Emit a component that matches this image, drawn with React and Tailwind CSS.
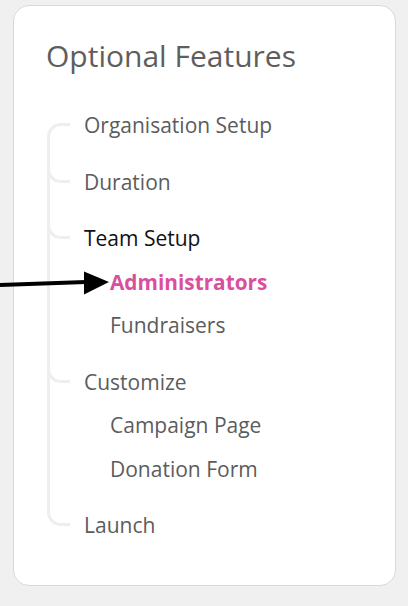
import React from "react";

const steps = [
  { label: "Organisation Setup", level: 0 },
  { label: "Duration", level: 0 },
  { label: "Team Setup", level: 0, current: true },
  { label: "Administrators", level: 1, active: true },
  { label: "Fundraisers", level: 1 },
  { label: "Customize", level: 0 },
  { label: "Campaign Page", level: 1 },
  { label: "Donation Form", level: 1 },
  { label: "Launch", level: 0 },
];

function Gutter({ index, step }) {
  const isFirst = index === 0;
  const isLast = index === steps.length - 1;

  if (step.level === 1) {
    return (
      <div className="relative w-[37px] shrink-0 self-stretch">
        <div className="absolute left-0 top-0 bottom-0 w-[3px] bg-[#eeeeee]" />
      </div>
    );
  }

  return (
    <div className="relative w-[37px] shrink-0 self-stretch">
      {isFirst ? (
        <div className="absolute left-0 top-[19px] bottom-0 w-[23px] border-l-[3px] border-t-[3px] border-[#eeeeee] rounded-tl-[14px]" />
      ) : (
        <>
          {!isLast && <div className="absolute left-0 top-0 bottom-0 w-[3px] bg-[#eeeeee]" />}
          <div className="absolute left-0 top-0 h-[35px] w-[23px] border-l-[3px] border-b-[3px] border-[#eeeeee] rounded-bl-[14px]" />
        </>
      )}
    </div>
  );
}

export default function App() {
  return (
    <div
      className="relative min-h-screen bg-[#f0f0f0] pt-[5px] pl-[13px]"
      style={{ fontFamily: '"Open Sans", "Noto Sans", sans-serif' }}
    >
      {/* Card */}
      <div className="flex h-[581px] w-[383px] flex-col rounded-[16px] border border-[#d9d9d9] bg-white pt-[30px]">
        <h2 className="pl-[32px] text-[30px] leading-[40px] font-normal text-[#5e5e5e]">
          Optional Features
        </h2>

        {/* Step tree */}
        <nav className="mt-[28px] flex flex-col pl-[33px]">
          {steps.map((step, i) => (
            <div
              key={step.label}
              className={`flex ${i === 0 || step.level === 1 ? "h-[43.5px]" : "h-[56.5px]"}`}
            >
              <Gutter index={i} step={step} />
              <div
                className={`flex flex-1 items-center ${
                  i !== 0 && step.level === 0 ? "pt-[13px]" : ""
                } ${step.level === 1 ? "pl-[26px]" : ""} ${
                  step.active
                    ? "text-[20.8px] font-bold text-[#d94f9e]"
                    : step.current
                    ? "text-[21px] text-[#111111]"
                    : "text-[21px] text-[#5c5c5c]"
                }`}
              >
                {step.label}
              </div>
            </div>
          ))}
        </nav>
      </div>

      {/* Pointer arrow */}
      <svg className="absolute left-0 top-[268px]" width="112" height="32" viewBox="0 0 112 32">
        <path d="M0 17 Q 45 15.5 86 14" fill="none" stroke="#000" strokeWidth="4" />
        <polygon points="84,3.5 109,14 84,26.5" fill="#000" />
      </svg>
    </div>
  );
}
